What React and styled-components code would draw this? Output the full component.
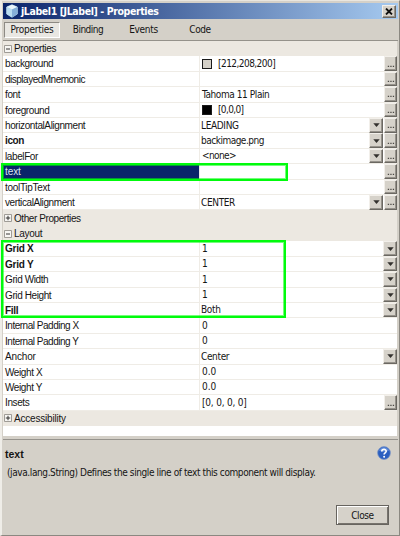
import React from 'react';
import styled, { createGlobalStyle, css } from 'styled-components';

const Global = createGlobalStyle`
  body { margin: 0; overflow: hidden; background: #d4d0c8; }
  *, *::before, *::after { box-sizing: border-box; }
`;
const tahoma = css`font-family: "DejaVu Sans Condensed", "DejaVu Sans", sans-serif; font-stretch: condensed;`;
const arial = css`font-family: "Liberation Sans", Arial, sans-serif;`;
const raised = css`
  background: #d6d2ca;
  border: 1px solid;
  border-color: #f2efea #6b6862 #6b6862 #f2efea;
  box-shadow: inset -1px -1px 0 #96928b;
`;

const Window = styled.div`
  position: relative;
  width: 400px;
  height: 536px;
  display: flex;
  flex-direction: column;
  background: #d4d0c8;
  border: solid;
  border-width: 1px 1px 1px 2px;
  border-color: #e9e6df #8b8881 #8b8881 #efede8;
  padding: 2px 1px 0 1px;
  color: #151515;
`;
const TitleBar = styled.header`
  height: 16px;
  flex: none;
  display: flex;
  align-items: center;
  padding: 0 2px 0 3px;
  background: linear-gradient(90deg, #0a246a, #a6caf0);
`;
const Title = styled.h1`
  ${tahoma}
  margin: 0 auto 0 3px;
  font-size: 10.5px;
  font-weight: bold;
  line-height: 16px;
  letter-spacing: ${p => p.$track}px;
  white-space: nowrap;
  color: #fff;
`;
const CloseBox = styled.button`
  ${raised}
  width: 14px;
  height: 13px;
  padding: 0;
  display: flex;
  align-items: center;
  justify-content: center;
`;
const Tabs = styled.nav`
  flex: none;
  height: 22px;
  display: grid;
  grid-template-columns: 56px 56px 55px 58px;
  padding: 3px 0 2px 1px;
  border-bottom: 1px solid #95928b;
`;
const Tab = styled.span`
  ${tahoma}
  font-size: 10px;
  letter-spacing: ${p => p.$track}px;
  line-height: 14px;
  text-align: center;
  border: 1px solid transparent;
  ${p => p.$active && css`
    background: #e9e7e2;
    border-color: #8d8a84 #fff #fff #8d8a84;
  `}
`;
const Sheet = styled.main`
  flex: none;
  height: 395px;
  width: 394px;
  background: #fff;
`;
const rowHeight = 15.42;
const Section = styled.div`
  ${arial}
  height: ${rowHeight}px;
  display: flex;
  align-items: center;
  gap: 2px;
  padding-left: 1px;
  background: #ece8e1;
  font-size: 10px;
  letter-spacing: ${p => p.$track}px;
`;
const Row = styled.div`
  height: ${rowHeight}px;
  display: grid;
  grid-template-columns: 197px 1fr auto auto;
  border-bottom: 1px solid #efece6;
`;
const Name = styled.span`
  ${arial}
  font-size: 10px;
  line-height: 15px;
  padding-left: 2px;
  font-weight: ${p => (p.$bold ? 'bold' : 'normal')};
  letter-spacing: ${p => p.$track}px;
  white-space: nowrap;
  border-right: 1px solid #efece6;
  ${p => p.$selected && css`background: #0a246a; color: #dfe4f0;`}
`;
const Value = styled.span`
  ${tahoma}
  display: flex;
  align-items: center;
  font-size: 10px;
  line-height: 14px;
  padding-left: ${p => p.$indent}px;
  letter-spacing: ${p => p.$track}px;
  white-space: pre;
`;
const Swatch = styled.i`
  width: 10px;
  height: 10px;
  margin-right: 6px;
  border: 1px solid #1b1b1b;
  background: ${p => p.$color};
`;
const CellButton = styled.button`
  ${raised}
  width: ${p => (p.$wide ? 14 : 13)}px;
  height: 14.5px;
  margin-right: ${p => (p.$gap ? 1 : 0)}px;
  padding: 0;
  display: flex;
  align-items: center;
  justify-content: center;
`;
const Highlight = styled.div`
  position: absolute;
  left: -1px;
  top: ${p => p.$top}px;
  width: ${p => p.$width}px;
  height: ${p => p.$height}px;
  border: 2px solid #00fb0c;
  outline: 1px solid rgba(0, 251, 12, 0.55);
  outline-offset: -3px;
  pointer-events: none;
`;
const Footer = styled.footer`
  flex: 1;
  width: 395px;
  margin-top: 3px;
  border-top: 1px solid #96938d;
  display: flex;
  flex-direction: column;
`;
const FooterHead = styled.div`
  display: flex;
  justify-content: space-between;
  padding: 6px 7px 0 2px;
  height: 23px;
`;
const FooterName = styled.h2`
  ${arial}
  margin: 0;
  font-size: 10.5px;
  line-height: 16px;
`;
const Description = styled.p`
  ${tahoma}
  margin: 0 0 0 4px;
  font-size: 10px;
  line-height: 19px;
  letter-spacing: ${p => p.$track}px;
  white-space: nowrap;
`;
const CloseButton = styled.button`
  ${tahoma}
  align-self: flex-end;
  width: 53px;
  height: 20px;
  margin: 23px 9px 0 0;
  padding: 0;
  font-size: 10px;
  letter-spacing: -0.4px;
  color: #151515;
  background: #d6d2ca;
  border: 1px solid #67645f;
  box-shadow: inset 1px 1px 0 #fff, inset -1px -1px 0 #77736d;
`;

const Cube = () => (
  <svg width="12" height="14" viewBox="0 0 12 14">
    <path d="M6 .8 11.3 3v7L6 13.3.7 10V3Z" fill="#a8d0ea" stroke="#c3dfef" strokeWidth=".7" />
    <path d="M6 .8 11.3 3 6 5.5.7 3Z" fill="#eaf6fb" />
    <path d="M6 5.5 11.3 3v7L6 13.3Z" fill="#85afd8" />
    <path d="M.7 3 6 5.5v7.8L.7 10Z" fill="#b9dcf0" />
  </svg>
);
const Cross = () => (
  <svg width="8" height="7" viewBox="0 0 8 7"><path d="m1 .5 6 6m0-6-6 6" stroke="#111" strokeWidth="1.8" /></svg>
);
const Arrow = () => (
  <svg width="7" height="4" viewBox="0 0 7 4"><path d="M.3.2h6.4L3.5 3.9Z" fill="#33312e" /></svg>
);
const Dots = () => (
  <svg width="8" height="8" viewBox="0 0 8 8"><path d="M.8 6.3h1.3m1.2 0h1.3m1.2 0h1.3" stroke="#4b4945" strokeWidth="1.2" /></svg>
);
const Toggle = ({ open }) => (
  <svg width="8" height="8" viewBox="0 0 8 8">
    <path d="M.5.5h7v7h-7Z" fill="#f7f6f3" stroke="#95928c" strokeWidth=".9" />
    <path d={open ? 'M2 4h4' : 'M1.8 4h4.4M4 1.8v4.4'} stroke="#222" strokeWidth=".9" />
  </svg>
);
const Help = () => (
  <svg width="14" height="14" viewBox="0 0 14 14">
    <circle cx="7" cy="7" r="6.4" fill="#2b5fc0" stroke="#7d96c6" strokeWidth=".7" />
    <path d="M2 4.8a5.3 5.3 0 0 1 10 0Q7 6.5 2 4.8Z" fill="#6d97df" opacity=".7" />
    <path d="M4.8 5.4C4.8 2.7 9.3 2.8 9.2 5.3 9.2 6.8 7.1 6.9 7.1 8.4" fill="none" stroke="#fff" strokeWidth="1.6" />
    <circle cx="7.1" cy="10.7" r="1" fill="#fff" />
  </svg>
);

const items = [
  { section: 'Properties', open: true, track: -0.35 },
  { name: 'background', value: '[212,208,200]', swatch: '#d4d0c8', dots: true, v: -0.55 },
  { name: 'displayedMnemonic', dots: true, t: -0.5 },
  { name: 'font', value: 'Tahoma 11 Plain', dots: true, v: -0.42 },
  { name: 'foreground', value: '[0,0,0]', swatch: '#000', dots: true, v: -0.65 },
  { name: 'horizontalAlignment', value: 'LEADING', indent: 1, drop: true, dots: true },
  { name: 'icon', bold: true, value: 'backimage.png', indent: 1, drop: true, dots: true, v: -0.5 },
  { name: 'labelFor', value: '<none>', indent: 2, drop: true, dots: true, v: -0.6 },
  { name: 'text', selected: true, dots: true, t: -0.1 },
  { name: 'toolTipText', dots: true, t: -0.3 },
  { name: 'verticalAlignment', value: 'CENTER', indent: 1, drop: true, dots: true },
  { section: 'Other Properties', track: -0.42 },
  { section: 'Layout', open: true, track: -0.3 },
  { name: 'Grid X', bold: true, value: '1', drop: true, t: -0.25 },
  { name: 'Grid Y', bold: true, value: '1', drop: true, t: -0.25 },
  { name: 'Grid Width', value: '1', drop: true },
  { name: 'Grid Height', value: '1', drop: true },
  { name: 'Fill', bold: true, value: 'Both', indent: 1, drop: true, t: -0.3 },
  { name: 'Internal Padding X', value: '0', t: -0.48 },
  { name: 'Internal Padding Y', value: '0', t: -0.48 },
  { name: 'Anchor', value: 'Center', indent: 1, drop: true, t: -0.15 },
  { name: 'Weight X', value: '0.0', v: 0 },
  { name: 'Weight Y', value: '0.0', v: 0 },
  { name: 'Insets', value: '[0, 0, 0, 0]', dots: true, v: -0.2 },
  { section: 'Accessibility', track: -0.2 },
];

const Property = ({ item }) => (
  <Row>
    <Name $bold={item.bold} $selected={item.selected} $track={item.t ?? -0.4}>{item.name}</Name>
    <Value $indent={item.indent ?? 2} $track={item.v ?? -0.35}>
      {item.swatch && <Swatch $color={item.swatch} />}
      {item.value}
    </Value>
    {item.drop && <CellButton $wide $gap={item.dots}><Arrow /></CellButton>}
    {item.dots && <CellButton><Dots /></CellButton>}
  </Row>
);

export default function App() {
  return (
    <>
      <Global />
      <Window>
        <TitleBar>
          <Cube />
          <Title $track={-0.4}>jLabel1 [JLabel] - Properties</Title>
          <CloseBox><Cross /></CloseBox>
        </TitleBar>
        <Tabs>
          <Tab $active $track={-0.25}>Properties</Tab>
          <Tab $track={-0.5}>Binding</Tab>
          <Tab $track={-0.3}>Events</Tab>
          <Tab $track={-0.4}>Code</Tab>
        </Tabs>
        <Sheet>
          {items.map(item => item.section
            ? <Section key={item.section} $track={item.track}><Toggle open={item.open} />{item.section}</Section>
            : <Property key={item.name} item={item} />)}
        </Sheet>
        <Footer>
          <FooterHead><FooterName>text</FooterName><Help /></FooterHead>
          <Description $track={-0.4}>(java.lang.String) Defines the single line of text this component will display.</Description>
          <CloseButton>Close</CloseButton>
        </Footer>
        <Highlight $top={162} $width={287} $height={18} />
        <Highlight $top={239} $width={285} $height={78} />
      </Window>
    </>
  );
}
